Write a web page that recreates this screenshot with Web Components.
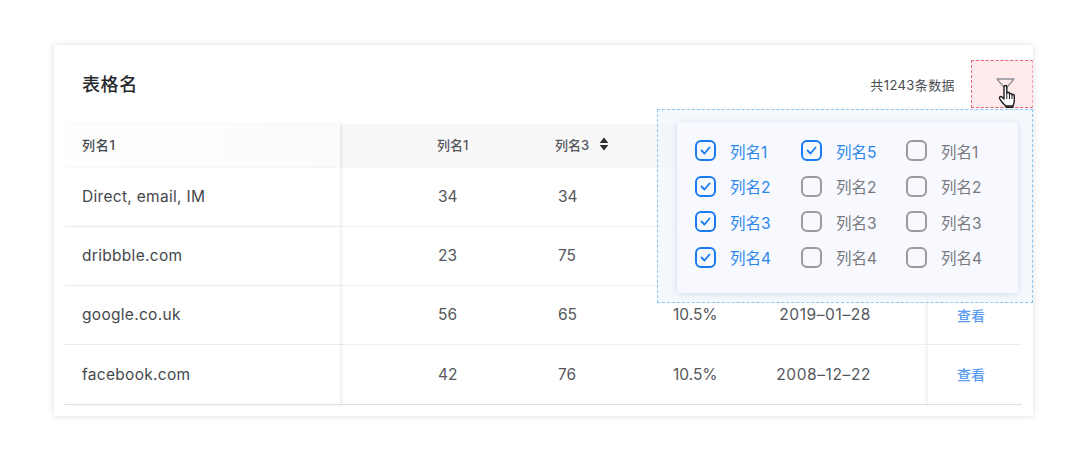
<!DOCTYPE html>
<html lang="zh">
<head>
<meta charset="utf-8">
<title>表格名</title>
<style>
  html, body { margin: 0; background: #fff; }
  body {
    width: 1080px; height: 471px; overflow: hidden; padding: 45px 47px 0 54px; box-sizing: border-box;
    font-family: Inter, "Noto Sans CJK SC", sans-serif;
  }
</style>
</head>
<body>
<table-card title="表格名" total="共1243条数据">
  <data-row head>
    <span>列名1</span><span>列名1</span><span>列名3<sort-mark></sort-mark></span><span></span><span></span><span></span>
  </data-row>
  <data-row>
    <span>Direct, email, IM</span><span>34</span><span>34</span><span></span><span></span><span></span>
  </data-row>
  <data-row>
    <span>dribbble.com</span><span>23</span><span>75</span><span></span><span></span><span></span>
  </data-row>
  <data-row>
    <span>google.co.uk</span><span>56</span><span>65</span><span>10.5%</span><span>2019–01–28</span><span>查看</span>
  </data-row>
  <data-row last>
    <span>facebook.com</span><span>42</span><span>76</span><span>10.5%</span><span>2008–12–22</span><span>查看</span>
  </data-row>
  <filter-panel slot="overlay"></filter-panel>
</table-card>

<script>
class TableCard extends HTMLElement {
  connectedCallback() {
    this.attachShadow({ mode: 'open' });
    this.shadowRoot.innerHTML = `
      <style>
        :host {
          display: block; position: relative; width: 979px; height: 371px; box-sizing: border-box;
          background: #fff; box-shadow: 0 0 7px rgba(0, 0, 0, .13); padding: 0 11px 0 10px;
        }
        .top { display: flex; align-items: center; height: 79px; padding: 0 67px 3px 18px; box-sizing: border-box; }
        h1 { margin: 0; font-size: 18px; letter-spacing: .6px; font-weight: 500; color: #26282c; flex: 1; }
        .total { font-size: 13px; letter-spacing: .4px; color: #4b4d52; position: relative; top: 1px; }
        .hot {
          position: absolute; left: 917px; top: 15px; width: 62px; height: 48px; box-sizing: border-box;
          background: #ffeaec; border: 1px dashed #e8607a; border-right-color: #f3a3ae;
        }
        .hot svg { position: absolute; left: 23px; top: 16px; }
      </style>
      <div class="top"><h1>${this.getAttribute('title')}</h1><span class="total">${this.getAttribute('total')}</span></div>
      <slot></slot>
      <div class="hot">
        <svg width="26" height="34" viewBox="0 0 26 34">
          <path d="M2 2h17l-8.500 10z" fill="none" stroke="#8f9296" stroke-width="1.300" stroke-linejoin="round"/>
          <path d="M10.500 29c-2-2.500-6-6-6-8.300 0-1.300 1.500-1.500 2.500-.7l2 2v-12c0-2 2.800-2 2.800 0v6.500c0-1.700 2.700-1.700 2.700 0v1c0-1.500 2.500-1.500 2.500 0v1c0-1.300 2.300-1.300 2.300.2v5c0 1.800-.8 3-1.300 5.300z" fill="#fff" stroke="#1d1c1f" stroke-width="1.400" stroke-linejoin="round"/>
          <path d="M11.800 17v5M14.500 18v4M17 19v3" stroke="#1d1c1f" stroke-width="1"/>
          <path d="M10.500 29.500h8v1.500h-8z" fill="#1d1c1f"/>
        </svg>
      </div>
      <slot name="overlay"></slot>`;
  }
}

class DataRow extends HTMLElement {
  connectedCallback() {
    this.attachShadow({ mode: 'open' });
    const head = this.hasAttribute('head');
    const last = this.hasAttribute('last');
    const line = head ? 'none' : `1px solid ${last ? '#dfe0e3' : '#f0f0f2'}`;
    // cells are light-DOM spans, so they are styled through ::slotted
    this.shadowRoot.innerHTML = `
      <style>
        :host {
          display: grid; grid-template-columns: 276px 215px 118px 87px 168px 94px;
          height: ${head ? 43.5 : 59.3}px; position: relative;
          background: ${head ? '#f8f8f9' : '#fff'};
        }
        ::slotted(span) {
          display: flex; align-items: center; box-sizing: border-box; padding-bottom: ${head ? 3 : 1}px; border-bottom: ${line};
          font-size: ${head ? 13 : 15.5}px;
          color: #55575b; ${head ? 'font-weight: 500;' : ''} white-space: nowrap;
        }
        ::slotted(span:nth-child(1)) { padding-left: 18px; background: ${head ? 'linear-gradient(90deg,#fefefe,#fbfbfc)' : '#fff'};
          box-shadow: 2px 0 3px rgba(0, 0, 0, .07); color: #45474c; position: relative; letter-spacing: ${head ? .8 : .3}px; }
        ::slotted(span:nth-child(2)) { padding-left: ${head ? 97 : 98}px; }
        ::slotted(span:nth-child(3)) { padding-left: ${head ? 0 : 3}px; }
        ::slotted(span:nth-child(5)) { justify-content: flex-end; padding-right: 57px; letter-spacing: .6px; }
        ::slotted(span:nth-child(6)) { padding-left: 29px; font-size: 14px; color: #5a9cf0; font-weight: 500;
          box-shadow: -2px 0 3px rgba(0, 0, 0, .06); background: #fff; position: relative; }
      </style>
      <slot></slot>`;
  }
}

class SortMark extends HTMLElement {
  connectedCallback() {
    this.attachShadow({ mode: 'open' });
    this.shadowRoot.innerHTML = `
      <style>:host { display: inline-flex; margin-left: 10px; }</style>
      <svg width="10" height="14" viewBox="0 0 9 13"><path d="M4.500 .5l4 5h-8zM4.500 12.500l-4-5h8z" fill="#2b2d31"/></svg>`;
  }
}

class CheckItem extends HTMLElement {
  connectedCallback() {
    this.attachShadow({ mode: 'open' });
    const on = this.hasAttribute('checked');
    this.shadowRoot.innerHTML = `
      <style>
        :host { display: flex; align-items: center; height: 21px; gap: 14px; font-size: 15.5px; color: ${on ? '#2a87ee' : '#77797e'}; }
        .box { width: 21px; height: 21px; flex: none; box-sizing: border-box; border-radius: 6px; border: 2px solid ${on ? '#1a7af0' : '#999ba0'};
          display: flex; align-items: center; justify-content: center; }
      </style>
      <span class="box">${on ? '<svg width="11" height="9" viewBox="0 0 11 9"><path d="M1.500 4.500l3 3 5-6" fill="none" stroke="#1a7af0" stroke-width="1.800" stroke-linecap="round" stroke-linejoin="round"/></svg>' : ''}</span>
      <span><slot></slot></span>`;
  }
}

class FilterPanel extends HTMLElement {
  connectedCallback() {
    this.attachShadow({ mode: 'open' });
    const cols = [[1, 2, 3, 4], [5, 2, 3, 4], [1, 2, 3, 4]];
    const items = [];
    for (let r = 0; r < 4; r++) {
      cols.forEach((col, c) => {
        const on = c === 0 || (c === 1 && r === 0);
        items.push(`<check-item ${on ? 'checked' : ''}>列名${col[r]}</check-item>`);
      });
    }
    this.shadowRoot.innerHTML = `
      <style>
        :host {
          position: absolute; left: 603px; top: 64px; width: 376px; height: 194px; box-sizing: border-box;
          background: rgba(240, 247, 254, .7); border: 1px dashed #8cc4f0; padding: 12px 14px 9px 19px; display: block;
        }
        .panel {
          height: 171px; box-sizing: border-box; background: #f7f9fe; border-radius: 3px;
          box-shadow: 0 1px 6px rgba(40, 60, 100, .16); padding: 18px 18px;
          display: grid; grid-template-columns: 106px 105px 1fr; grid-auto-rows: 21px; row-gap: 14.500px;
        }
      </style>
      <div class="panel">${items.join('')}</div>`;
  }
}

customElements.define('table-card', TableCard);
customElements.define('data-row', DataRow);
customElements.define('sort-mark', SortMark);
customElements.define('check-item', CheckItem);
customElements.define('filter-panel', FilterPanel);
</script>
</body>
</html>
